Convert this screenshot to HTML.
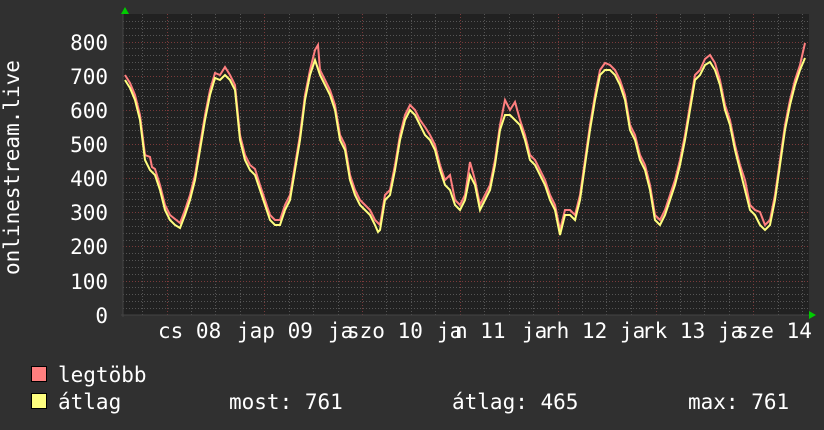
<!DOCTYPE html>
<html><head><meta charset="utf-8"><style>
html,body{margin:0;padding:0;background:#303030;}
svg{display:block}
text{font-family:"DejaVu Sans Mono","Liberation Mono",monospace;font-size:21px;fill:#fff}
</style></head><body>
<svg width="824" height="430" viewBox="0 0 824 430" xmlns="http://www.w3.org/2000/svg">
<rect width="824" height="430" fill="#303030"/>
<rect x="123" y="14" width="686" height="301" fill="#212121"/>
<g stroke="#555" stroke-width="1" stroke-dasharray="1,2">
<path d="M123 308.5H809M123 301.5H809M123 294.5H809M123 287.5H809M123 274.5H809M123 267.5H809M123 260.5H809M123 253.5H809M123 240.5H809M123 233.5H809M123 226.5H809M123 219.5H809M123 206.5H809M123 199.5H809M123 192.5H809M123 185.5H809M123 171.5H809M123 164.5H809M123 158.5H809M123 151.5H809M123 137.5H809M123 130.5H809M123 124.5H809M123 117.5H809M123 103.5H809M123 96.5H809M123 89.5H809M123 83.5H809M123 69.5H809M123 62.5H809M123 55.5H809M123 48.5H809M123 35.5H809M123 28.5H809M123 21.5H809"/>
<path d="M142.5 14V315M191.5 14V315M215.5 14V315M240.5 14V315M289.5 14V315M313.5 14V315M338.5 14V315M386.5 14V315M411.5 14V315M435.5 14V315M484.5 14V315M509.5 14V315M533.5 14V315M582.5 14V315M606.5 14V315M631.5 14V315M680.5 14V315M704.5 14V315M729.5 14V315M778.5 14V315M802.5 14V315"/>
</g>
<g stroke="#7a3a3a" stroke-width="1" stroke-dasharray="1,2">
<path d="M123 281.5H809M123 246.5H809M123 212.5H809M123 178.5H809M123 144.5H809M123 110.5H809M123 76.5H809M123 42.5H809"/>
<path d="M167.5 14V315M264.5 14V315M362.5 14V315M460.5 14V315M558.5 14V315M656.5 14V315M753.5 14V315"/>
</g>
<path d="M123 14V317M121 315H809" stroke="#444" stroke-width="1"/>
<path d="M121 14L125 7L129 14Z" fill="#0c0"/>
<path d="M809 311L816 315L809 319Z" fill="#0c0"/>
<g fill="none" stroke-width="2" stroke-linejoin="miter">
<polyline stroke="#ff7f7f" transform="translate(0,-3)" points="125,78 130,86 135,98 140,118 145,158 150,160 152,170 155,172 160,188 165,208 170,218 175,222 180,226 185,213 190,198 195,178 200,148 205,118 210,93 215,76 220,78 225,70 230,78 235,88 240,138 243,150 245,158 250,168 255,172 260,188 265,203 270,218 275,223 280,223 285,208 290,198 295,168 300,138 305,98 310,73 315,53 318,48 320,73 325,83 330,93 335,108 340,138 345,148 350,178 355,193 360,203 365,208 370,213 375,223 380,228 385,198 390,193 395,168 400,138 405,118 410,108 415,113 420,123 425,130 430,138 435,148 440,168 445,183 450,178 455,203 460,208 465,198 470,165 475,183 480,208 485,198 490,188 495,163 500,128 505,103 510,113 515,105 520,123 525,138 530,158 535,163 540,173 545,183 550,198 555,208 560,233 565,213 570,213 575,218 580,198 585,163 590,128 595,98 600,73 605,66 610,68 615,73 620,83 625,98 630,128 635,138 640,158 645,168 650,188 655,218 660,223 665,213 670,198 675,183 680,163 685,138 690,108 695,78 700,73 705,62 710,58 715,66 720,83 725,108 730,123 735,148 740,168 745,183 750,208 755,213 760,215 765,228 770,223 775,198 780,163 785,128 790,103 795,83 800,68 805,46"/>
<polyline stroke="#ffff7f" points="125,80 130,88 135,100 140,120 145,160 150,170 155,175 160,190 165,210 170,220 175,225 180,228 185,215 190,200 195,180 200,150 205,120 210,95 215,78 220,80 225,75 230,80 235,90 240,140 245,160 250,170 255,175 260,190 265,205 270,220 275,225 280,225 285,210 290,200 295,170 300,140 305,100 310,75 315,60 320,75 325,85 330,95 335,110 340,140 345,150 350,180 355,195 360,205 365,210 370,215 375,225 378,232 380,230 385,200 390,195 395,170 400,140 405,120 410,110 415,115 420,125 425,135 430,140 435,150 440,170 445,185 450,190 455,205 460,210 465,200 470,175 475,185 480,210 485,200 490,190 495,165 500,130 505,115 510,115 515,120 520,125 525,140 530,160 535,165 540,175 545,185 550,200 555,210 560,235 565,215 570,215 575,220 580,200 585,165 590,130 595,100 600,75 605,70 610,70 615,75 620,85 625,100 630,130 635,140 640,160 645,170 650,190 655,220 660,225 665,215 670,200 675,185 680,165 685,140 690,110 695,80 700,75 705,65 710,62 715,70 720,85 725,110 730,125 735,150 740,170 745,190 750,210 755,215 760,225 765,230 770,225 775,200 780,165 785,130 790,105 795,85 800,70 805,58"/>
</g>
<g text-anchor="end">
<text x="108" y="50">800</text><text x="108" y="84">700</text><text x="108" y="118">600</text><text x="108" y="152">500</text><text x="108" y="186">400</text><text x="108" y="220">300</text><text x="108" y="254">200</text><text x="108" y="289">100</text><text x="108" y="323">0</text>
</g>
<text transform="translate(19,275) rotate(-90)">onlinestream.live</text>
<text x="158" y="338">cs 08</text>
<text x="237" y="338">jap 09</text>
<text x="328" y="338">ja</text><text x="347" y="338">szo 10</text>
<text x="437" y="338">ja</text><text x="455" y="338">n 11</text>
<text x="522" y="338">ja</text><text x="544" y="338">rh 12</text>
<text x="620" y="338">ja</text><text x="642" y="338">rk 13</text>
<text x="718" y="338">ja</text><text x="736" y="338">sze 14</text>
<rect x="31.5" y="366.5" width="15" height="15" fill="#ff7f7f" stroke="#000"/>
<rect x="31.5" y="393.5" width="15" height="15" fill="#ffff7f" stroke="#000"/>
<text x="58" y="382">legtöbb</text>
<text x="58" y="409">átlag</text>
<text x="229" y="409">most: 761</text>
<text x="452" y="409">átlag: 465</text>
<text x="688" y="409">max: 761</text>
</svg>
</body></html>
